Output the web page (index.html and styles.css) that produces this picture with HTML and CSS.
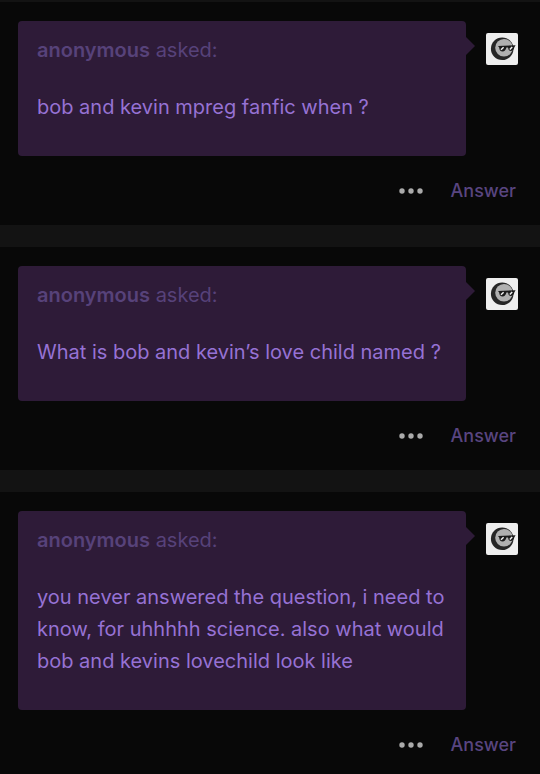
FILE: index.html
```html
<!DOCTYPE html>
<html lang="en">
<head>
    <meta charset="UTF-8">
    <meta name="viewport" content="width=device-width, initial-scale=1.0">
    <title>Inbox</title>
    <link rel="stylesheet" href="styles.css">
</head>
<body>
    <svg class="sprite" aria-hidden="true">
        <symbol id="avatar-face" viewBox="0 0 32 32">
            <circle cx="16.2" cy="15.8" r="11.3" fill="#262626"/>
            <circle cx="18" cy="14.8" r="8.8" fill="#b0b0b0"/>
            <path d="M12 12.9 L29.6 12.2 L28.4 14.2 Q27.4 18 24.8 18 Q22.4 17.8 22 14.4 L20.4 14.4 Q19.4 18.4 16.6 18.4 Q13.4 18.2 13.2 14.4 Z" fill="#1a1a1a"/>
            <path d="M15 16.8 L17.6 14.2 M23.8 16.6 L26.2 14" stroke="#f0f0f0" stroke-width="1.5"/>
        </symbol>
        <symbol id="dots" viewBox="0 0 24 6">
            <circle cx="3" cy="3" r="2.7"/>
            <circle cx="12" cy="3" r="2.7"/>
            <circle cx="21" cy="3" r="2.7"/>
        </symbol>
    </svg>

    <main class="inbox">
        <article class="ask">
            <div class="ask-row">
                <div class="bubble">
                    <p class="asker"><strong>anonymous</strong> asked:</p>
                    <p class="question">bob and kevin mpreg fanfic when ?</p>
                </div>
                <a class="avatar" href="#" aria-label="Blog"><svg><use href="#avatar-face"/></svg></a>
            </div>
            <div class="actions">
                <button class="more" aria-label="More options"><svg><use href="#dots"/></svg></button>
                <button class="answer">Answer</button>
            </div>
        </article>

        <article class="ask">
            <div class="ask-row">
                <div class="bubble">
                    <p class="asker"><strong>anonymous</strong> asked:</p>
                    <p class="question">What is bob and kevin’s love child named ?</p>
                </div>
                <a class="avatar" href="#" aria-label="Blog"><svg><use href="#avatar-face"/></svg></a>
            </div>
            <div class="actions">
                <button class="more" aria-label="More options"><svg><use href="#dots"/></svg></button>
                <button class="answer">Answer</button>
            </div>
        </article>

        <article class="ask">
            <div class="ask-row">
                <div class="bubble">
                    <p class="asker"><strong>anonymous</strong> asked:</p>
                    <p class="question">you never answered the question, i need to know, for uhhhhh science. also what would bob and kevins lovechild look like</p>
                </div>
                <a class="avatar" href="#" aria-label="Blog"><svg><use href="#avatar-face"/></svg></a>
            </div>
            <div class="actions">
                <button class="more" aria-label="More options"><svg><use href="#dots"/></svg></button>
                <button class="answer">Answer</button>
            </div>
        </article>
    </main>
</body>
</html>
```

FILE: styles.css
```css
body {
    margin: 0;
    background-color: #131313;
    font-family: Inter, "Liberation Sans", sans-serif;
    font-size: 20px;
    line-height: 32px;
}
.sprite {
    display: none;
}
.inbox {
    display: flex;
    flex-direction: column;
    gap: 22px;
    padding-top: 2px;
}
.ask {
    padding: 19px 22px 0 18px;
    background-color: #080808;
}
.ask-row {
    display: flex;
    align-items: flex-start;
    gap: 20px;
}
.bubble {
    position: relative;
    flex: 1;
    padding: 13px 19px 33px;
    border-radius: 4px;
    background-color: #2e1b38;
}
.bubble::after {
    content: "";
    position: absolute;
    top: 16px;
    left: 100%;
    border: 9px solid transparent;
    border-left-color: #2e1b38;
    border-right: 0;
}
.asker {
    margin: 0 0 25px;
    color: #57427a;
}
.asker strong {
    font-weight: 600;
}
.question {
    margin: 0;
    color: #9672d4;
}
.avatar {
    margin-top: 12px;
    width: 32px;
    height: 32px;
    border-radius: 2px;
    background-color: #eee;
}
.avatar svg {
    display: block;
    width: 32px;
    height: 32px;
}
.actions {
    display: flex;
    align-items: center;
    justify-content: flex-end;
    gap: 28px;
    height: 69px;
    padding-right: 2px;
}
button {
    padding: 0;
    border: none;
    background: none;
    font: inherit;
    cursor: pointer;
}
.more svg {
    display: block;
    width: 24px;
    height: 6px;
    fill: #aaa;
}
.answer {
    color: #594580;
    font-size: 18px;
    font-weight: 500;
}
```
